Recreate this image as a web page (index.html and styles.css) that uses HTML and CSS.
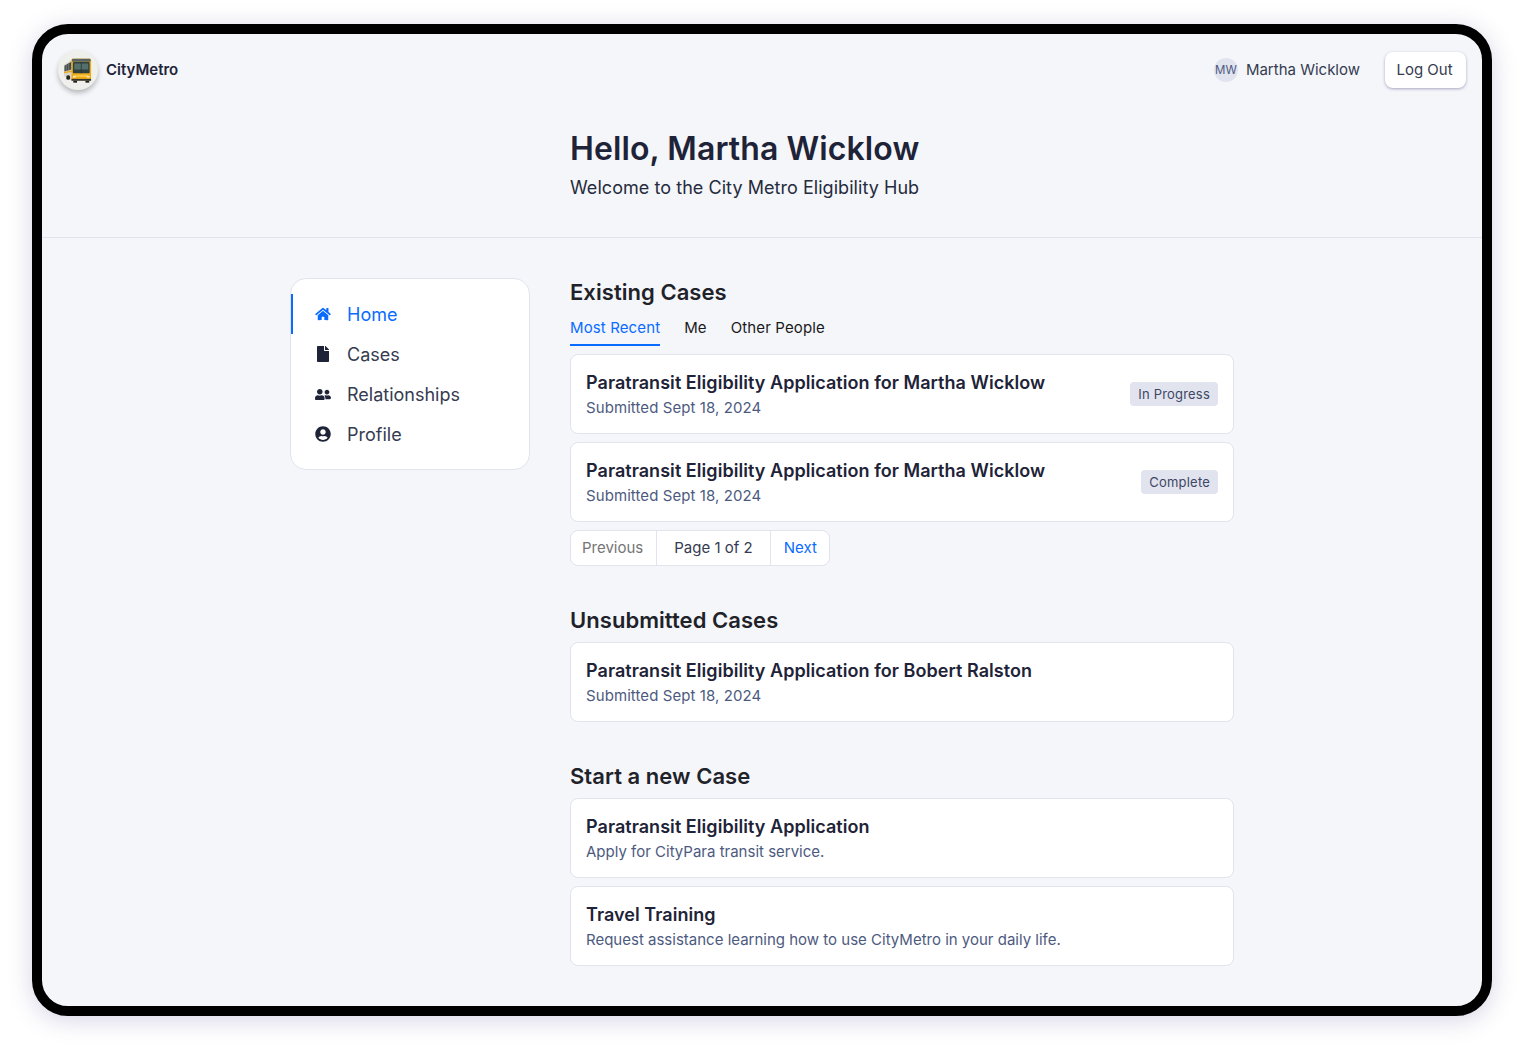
FILE: index.html
```html
<!DOCTYPE html>
<html lang="en">

<head>
    <meta charset="UTF-8">
    <meta name="viewport" content="width=device-width, initial-scale=1.0">
    <title>CityMetro Eligibility Hub</title>
    <link rel="stylesheet" href="styles.css">
</head>

<body>
    <div class="device">
        <header class="topbar">
            <div class="brand">
                <span class="brand-logo">
                    <!-- little bus, front three quarter view -->
                    <svg width="28" height="25" viewBox="0 0 30 26">
                        <!-- side -->
                        <path d="M0 7 L9 1 L9 24 L0 19 Z" fill="#d8d6cc"/>
                        <path d="M0.5 8 L8 3.5 L8 12 L0.5 14 Z" fill="#454c4b"/>
                        <path d="M2.5 7 V13.5 M5 5.5 V12.8" stroke="#8b908c" stroke-width="0.7"/>
                        <path d="M0 14.5 L9 12.8 V14.5 L0 16 Z" fill="#e9a91d"/>
                        <rect x="2.5" y="18" width="4" height="5" rx="1.8" fill="#24241f"/>
                        <!-- front -->
                        <rect x="8" y="0.5" width="21" height="23" rx="1.5" fill="#f0ab16"/>
                        <rect x="8.5" y="0.5" width="20" height="3" rx="1" fill="#59645f"/>
                        <rect x="9.5" y="4" width="18" height="12" rx="1" fill="#2f403f"/>
                        <path d="M11 5.5 H26 V12 H11 Z" fill="#54706d"/>
                        <path d="M18.5 4 V16" stroke="#20292a" stroke-width="0.7"/>
                        <rect x="11" y="17.5" width="15" height="2.5" fill="#f7c445"/>
                        <rect x="9.5" y="19" width="3" height="1.5" fill="#fff3c6"/>
                        <rect x="24.5" y="19" width="3" height="1.5" fill="#fff3c6"/>
                        <rect x="8" y="22" width="21" height="2" fill="#34332c"/>
                        <rect x="10" y="24" width="4" height="2" fill="#1c1c1c"/>
                        <rect x="23" y="24" width="4" height="2" fill="#1c1c1c"/>
                    </svg>
                </span>
                <span class="brand-name">CityMetro</span>
            </div>
            <div class="account">
                <span class="avatar">MW</span>
                <span class="account-name">Martha Wicklow</span>
                <button class="logout">Log Out</button>
            </div>
        </header>

        <section class="hero">
            <div class="hero-text">
                <h1>Hello, Martha Wicklow</h1>
                <p>Welcome to the City Metro Eligibility Hub</p>
            </div>
        </section>

        <div class="layout">
            <nav class="sidenav">
                <a class="nav-item active" href="#">
                    <span class="nav-icon">
                        <svg width="16" height="14" viewBox="0 0 576 512"><path fill="currentColor" d="M280.37 148.26L96 300.11V464a16 16 0 0 0 16 16l112.06-.29a16 16 0 0 0 15.92-16V368a16 16 0 0 1 16-16h64a16 16 0 0 1 16 16v95.64a16 16 0 0 0 16 16.05L464 480a16 16 0 0 0 16-16V300L295.67 148.26a12.19 12.19 0 0 0-15.3 0zM571.6 251.47L488 182.56V44.05a12 12 0 0 0-12-12h-56a12 12 0 0 0-12 12v72.61L318.47 43a48 48 0 0 0-61 0L4.34 251.47a12 12 0 0 0-1.6 16.9l25.5 31A12 12 0 0 0 45.15 301l235.22-193.74a12.19 12.19 0 0 1 15.3 0L530.9 301a12 12 0 0 0 16.9-1.6l25.5-31a12 12 0 0 0-1.7-16.93z"/></svg>
                    </span>
                    Home
                </a>
                <a class="nav-item" href="#">
                    <span class="nav-icon">
                        <svg width="12" height="16" viewBox="0 0 384 512"><path fill="currentColor" d="M224 136V0H24C10.7 0 0 10.7 0 24v464c0 13.3 10.7 24 24 24h336c13.3 0 24-10.7 24-24V160H248c-13.2 0-24-10.8-24-24zm160-14.1v6.1H256V0h6.1c6.4 0 12.5 2.5 17 7l97.9 98c4.5 4.5 7 10.6 7 16.9z"/></svg>
                    </span>
                    Cases
                </a>
                <a class="nav-item" href="#">
                    <span class="nav-icon">
                        <svg width="16" height="13" viewBox="0 0 640 512"><path fill="currentColor" d="M192 256c61.9 0 112-50.1 112-112S253.9 32 192 32 80 82.1 80 144s50.1 112 112 112zm76.8 32h-8.3c-20.8 10-43.9 16-68.5 16s-47.6-6-68.5-16h-8.3C51.6 288 0 339.6 0 403.2V432c0 26.5 21.5 48 48 48h288c26.5 0 48-21.5 48-48v-28.8c0-63.6-51.6-115.2-115.2-115.2zM480 256c53 0 96-43 96-96s-43-96-96-96-96 43-96 96 43 96 96 96zm48 32h-3.8c-13.9 4.8-28.6 8-44.2 8s-30.3-3.2-44.2-8H432c-20.4 0-39.2 5.9-55.7 15.4 24.4 26.3 39.7 61.2 39.7 99.8v38.4c0 2.2-.5 4.3-.6 6.4H592c26.5 0 48-21.5 48-48 0-61.9-50.1-112-112-112z"/></svg>
                    </span>
                    Relationships
                </a>
                <a class="nav-item" href="#">
                    <span class="nav-icon">
                        <svg width="16" height="16" viewBox="0 0 496 512"><path fill="currentColor" d="M248 8C111 8 0 119 0 256s111 248 248 248 248-111 248-248S385 8 248 8zm0 96c48.6 0 88 39.4 88 88s-39.4 88-88 88-88-39.4-88-88 39.4-88 88-88zm0 344c-58.7 0-111.3-26.6-146.5-68.2 18.8-35.4 55.6-59.8 98.5-59.8 2.4 0 4.8.4 7.1 1.1 13 4.2 26.6 6.9 40.9 6.9 14.3 0 28-2.7 40.9-6.9 2.3-.7 4.7-1.1 7.1-1.1 42.9 0 79.7 24.4 98.5 59.8C359.3 421.4 306.7 448 248 448z"/></svg>
                    </span>
                    Profile
                </a>
            </nav>

            <main class="content">
                <section class="group">
                    <h2>Existing Cases</h2>
                    <div class="tabs">
                        <a class="tab active" href="#">Most Recent</a>
                        <a class="tab" href="#">Me</a>
                        <a class="tab" href="#">Other People</a>
                    </div>
                    <div class="cards">
                        <div class="card">
                            <div class="card-body">
                                <div class="card-title">Paratransit Eligibility Application for Martha Wicklow</div>
                                <div class="card-sub date">Submitted Sept 18, 2024</div>
                            </div>
                            <span class="badge">In Progress</span>
                        </div>
                        <div class="card">
                            <div class="card-body">
                                <div class="card-title">Paratransit Eligibility Application for Martha Wicklow</div>
                                <div class="card-sub date">Submitted Sept 18, 2024</div>
                            </div>
                            <span class="badge">Complete</span>
                        </div>
                    </div>
                    <div class="pager">
                        <span class="pager-cell muted">Previous</span>
                        <span class="pager-cell current">Page 1 of 2</span>
                        <a class="pager-cell link" href="#">Next</a>
                    </div>
                </section>

                <section class="group">
                    <h2>Unsubmitted Cases</h2>
                    <div class="cards">
                        <div class="card">
                            <div class="card-body">
                                <div class="card-title">Paratransit Eligibility Application for Bobert Ralston</div>
                                <div class="card-sub date">Submitted Sept 18, 2024</div>
                            </div>
                        </div>
                    </div>
                </section>

                <section class="group">
                    <h2>Start a new Case</h2>
                    <div class="cards">
                        <div class="card">
                            <div class="card-body">
                                <div class="card-title">Paratransit Eligibility Application</div>
                                <div class="card-sub">Apply for CityPara transit service.</div>
                            </div>
                        </div>
                        <div class="card">
                            <div class="card-body">
                                <div class="card-title">Travel Training</div>
                                <div class="card-sub">Request assistance learning how to use CityMetro in your daily life.</div>
                            </div>
                        </div>
                    </div>
                </section>
            </main>
        </div>
    </div>
</body>

</html>
```

FILE: styles.css
```css
* {
    box-sizing: border-box;
}

html,
body {
    margin: 0;
    background-color: #fff;
}

body {
    font-family: Inter, "Liberation Sans", sans-serif;
    color: #1e2338;
    padding: 24px 32px 40px;
}

a {
    text-decoration: none;
    color: inherit;
}

/* Tablet frame */
.device {
    width: 1460px;
    height: 992px;
    border: 10px solid #000;
    border-radius: 36px;
    background-color: #f4f6fa;
    box-shadow: 0 4px 24px rgba(70, 60, 140, 0.22);
    overflow: hidden;
}

.topbar {
    display: flex;
    justify-content: space-between;
    align-items: center;
    height: 72px;
    padding: 0 16px;
}

.brand {
    display: flex;
    align-items: center;
    gap: 8px;
}

.brand-logo {
    display: flex;
    align-items: center;
    justify-content: center;
    width: 40px;
    height: 40px;
    border-radius: 50%;
    background-color: #efefeb;
    box-shadow: 0 3px 5px rgba(0, 0, 0, 0.25);
}

.brand-name {
    font-size: 15px;
    font-weight: 600;
    line-height: 20px;
}

.account {
    display: flex;
    align-items: center;
}

.avatar {
    display: flex;
    align-items: center;
    justify-content: center;
    width: 24px;
    height: 24px;
    border-radius: 50%;
    background-color: #e1e4ef;
    color: #4d5a80;
    font-size: 11.5px;
}

.account-name {
    margin-left: 8px;
    font-size: 15px;
    line-height: 20px;
    color: #353b50;
}

.logout {
    margin-left: 25px;
    width: 81px;
    height: 36px;
    padding: 0 2px 2px 0;
    border: 0;
    border-radius: 8px;
    background-color: #fff;
    color: #353b50;
    font-family: inherit;
    font-size: 15px;
    box-shadow: 0 1px 3px rgba(50, 45, 110, 0.4);
}

.hero {
    height: 132px;
    padding-top: 23px;
    border-bottom: 1px solid #e1e4ef;
}

.hero-text {
    width: 664px;
    margin-left: 528px;
}

h1 {
    margin: 0;
    font-size: 32px;
    font-weight: 600;
    letter-spacing: 0.1px;
    line-height: 40px;
}

.hero-text p {
    margin: 6px 0 0;
    font-size: 18px;
    letter-spacing: 0.05px;
    line-height: 26px;
    color: #262b3d;
}

.layout {
    display: flex;
    align-items: flex-start;
    gap: 40px;
    width: 944px;
    margin: 40px auto 0;
}

/* Left navigation */
.sidenav {
    flex: 0 0 240px;
    padding: 15px 0;
    border: 1px solid #e1e4ef;
    border-radius: 16px;
    background-color: #fff;
}

.nav-item {
    display: flex;
    align-items: center;
    height: 40px;
    padding-left: 22px;
    border-left: 2px solid transparent;
    font-size: 18px;
    color: #353b50;
}

.nav-item.active {
    border-left-color: #0a6cff;
    color: #0a6cff;
}

.nav-icon {
    display: flex;
    justify-content: center;
    width: 16px;
    margin-right: 16px;
    color: #1e2338;
}

.nav-item.active .nav-icon {
    color: #0a6cff;
}

/* Main column */
.content {
    flex: 1;
}

.group {
    margin-bottom: 40px;
}

h2 {
    margin: 0;
    font-size: 22px;
    font-weight: 600;
    letter-spacing: 0.05px;
    line-height: 28px;
    color: #1f2229;
}

.tabs {
    display: flex;
    gap: 24px;
    margin-top: 8px;
    height: 32px;
}

.tab {
    font-size: 15px;
    letter-spacing: 0.12px;
    line-height: 28px;
    color: #1a1a1a;
}

.tab.active {
    color: #0a6cff;
    border-bottom: 2px solid #0a6cff;
}

.cards {
    display: flex;
    flex-direction: column;
    gap: 8px;
    margin-top: 8px;
}

.card {
    display: flex;
    align-items: center;
    justify-content: space-between;
    height: 80px;
    padding: 0 15px;
    border: 1px solid #e1e4ef;
    border-radius: 8px;
    background-color: #fff;
}

.card-body {
    padding: 2px 0 1px;
}

.card-title {
    font-size: 18px;
    font-weight: 600;
    letter-spacing: 0.05px;
    line-height: 24px;
    color: #1e2338;
}

.card-sub {
    margin-top: 2px;
    font-size: 15px;
    line-height: 22px;
    color: #4d5a80;
}

.card-sub.date {
    letter-spacing: 0.08px;
}

.badge {
    padding: 0 8px;
    height: 24px;
    border-radius: 4px;
    background-color: #e1e4ef;
    color: #3e4663;
    font-size: 13px;
    letter-spacing: 0.2px;
    line-height: 24px;
}

.pager {
    display: inline-flex;
    height: 36px;
    margin-top: 8px;
    border: 1px solid #e1e4ef;
    border-radius: 8px;
    background-color: #fff;
    font-size: 15px;
    line-height: 34px;
}

.pager-cell {
    padding: 0 12px;
}

.pager-cell.muted {
    padding: 0 13px 0 11px;
    color: #757575;
}

.pager-cell.current {
    padding: 0 17px;
    border-left: 1px solid #e1e4ef;
    border-right: 1px solid #e1e4ef;
    color: #353b50;
}

.pager-cell.link {
    padding-left: 13px;
    color: #0a6cff;
}
```
